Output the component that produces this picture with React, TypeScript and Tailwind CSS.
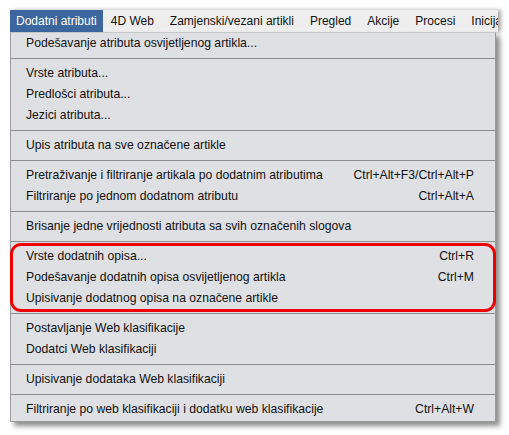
import { Fragment } from "react";

type Item = { label: string; shortcut?: string } | "sep";

const top: Item[] = [
  { label: "Podešavanje atributa osvijetljenog artikla..." },
  "sep",
  { label: "Vrste atributa..." },
  { label: "Predlošci atributa..." },
  { label: "Jezici atributa..." },
  "sep",
  { label: "Upis atributa na sve označene artikle" },
  "sep",
  { label: "Pretraživanje i filtriranje artikala po dodatnim atributima", shortcut: "Ctrl+Alt+F3/Ctrl+Alt+P" },
  { label: "Filtriranje po jednom dodatnom atributu", shortcut: "Ctrl+Alt+A" },
  "sep",
  { label: "Brisanje jedne vrijednosti atributa sa svih označenih slogova" },
  "sep",
];

const marked: Item[] = [
  { label: "Vrste dodatnih opisa...", shortcut: "Ctrl+R" },
  { label: "Podešavanje dodatnih opisa osvijetljenog artikla", shortcut: "Ctrl+M" },
  { label: "Upisivanje dodatnog opisa na označene artikle" },
];

const bottom: Item[] = [
  "sep",
  { label: "Postavljanje Web klasifikacije" },
  { label: "Dodatci Web klasifikaciji" },
  "sep",
  { label: "Upisivanje dodataka Web klasifikaciji" },
  "sep",
  { label: "Filtriranje po web klasifikaciji i dodatku web klasifikacije", shortcut: "Ctrl+Alt+W" },
];

const menus = ["4D Web", "Zamjenski/vezani artikli", "Pregled", "Akcije", "Procesi", "Inicija"];

function Rows({ items }: { items: Item[] }) {
  return (
    <>
      {items.map((it, i) =>
        it === "sep" ? (
          <div key={i} className="h-[9px] flex items-center">
            <div className="h-px w-full bg-[#8c8c8c]" />
          </div>
        ) : (
          <div key={i} className="h-[21px] flex items-center justify-between pl-[15px] pr-[21px]">
            <span>{it.label}</span>
            {it.shortcut && <span>{it.shortcut}</span>}
          </div>
        )
      )}
    </>
  );
}

export default function App() {
  return (
    <div
      className="w-[509px] h-[435px] bg-white pl-[10px] pt-[10px] text-[12.2px] text-[#111] overflow-hidden"
      style={{ fontFamily: "Arial, 'Liberation Sans', sans-serif" }}
    >
      <div className="w-[488px] h-[22px] flex bg-[#eeeeee] overflow-hidden shadow-[3px_0_4px_rgba(0,0,0,0.35)] whitespace-nowrap text-[12px]">
        <div className="bg-[#3b669e] text-white px-[6px] flex items-center">Dodatni atributi</div>
        {menus.map((m) => (
          <Fragment key={m}>
            <div className="px-[8px] flex items-center">{m}</div>
          </Fragment>
        ))}
      </div>
      <div className="relative w-[486px] h-[390px] bg-[#dfe0e4] border border-[#9a9a9a] border-t-[#c8c8c8] shadow-[4px_4px_5px_rgba(0,0,0,0.45)] whitespace-nowrap">
        <Rows items={top} />
        <div className="-mx-px border-[3px] border-[#ee0000] rounded-[11px] -my-[3px]">
          <div className="-ml-[2px] -mr-[2px]">
            <Rows items={marked} />
          </div>
        </div>
        <Rows items={bottom} />
      </div>
    </div>
  );
}
